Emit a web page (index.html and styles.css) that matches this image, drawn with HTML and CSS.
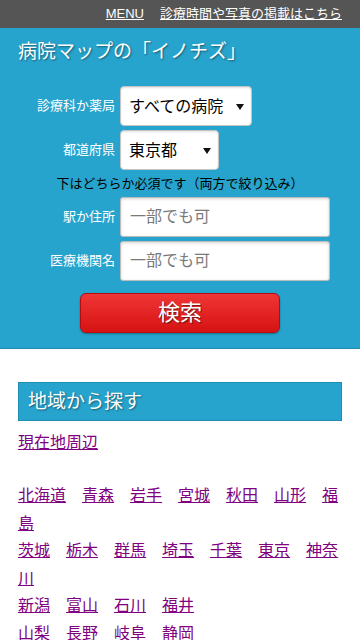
FILE: index.html
```html
<!DOCTYPE html>
<html lang="ja">
<head>
<meta charset="utf-8">
<title>病院マップの「イノチズ」</title>
<link rel="stylesheet" href="styles.css">
</head>
<body>
<div class="topbar">
  <a href="#">MENU</a>
  <a href="#">診療時間や写真の掲載はこちら</a>
</div>
<div class="hero">
  <h1 class="title">病院マップの「イノチズ」</h1>
  <form class="form">
    <div class="row">
      <label class="label">診療科か薬局</label>
      <div class="select-wrap w1"><select class="select"><option>すべての病院</option></select></div>
    </div>
    <div class="row">
      <label class="label">都道府県</label>
      <div class="select-wrap w2"><select class="select"><option>東京都</option></select></div>
    </div>
    <p class="note">下はどちらか必須です（両方で絞り込み）</p>
    <div class="row">
      <label class="label">駅か住所</label>
      <input class="input" type="text" placeholder="一部でも可">
    </div>
    <div class="row">
      <label class="label">医療機関名</label>
      <input class="input" type="text" placeholder="一部でも可">
    </div>
    <div class="btn-row"><button class="btn" type="button">検索</button></div>
  </form>
</div>
<div class="content">
  <h2 class="heading">地域から探す</h2>
  <p class="near"><a class="link" href="#">現在地周辺</a></p>
  <div class="prefs">
    <div class="group"><a class="link" href="#">北海道</a><a class="link" href="#">青森</a><a class="link" href="#">岩手</a><a class="link" href="#">宮城</a><a class="link" href="#">秋田</a><a class="link" href="#">山形</a><a class="link" href="#">福島</a></div>
    <div class="group"><a class="link" href="#">茨城</a><a class="link" href="#">栃木</a><a class="link" href="#">群馬</a><a class="link" href="#">埼玉</a><a class="link" href="#">千葉</a><a class="link" href="#">東京</a><a class="link" href="#">神奈川</a></div>
    <div class="group"><a class="link" href="#">新潟</a><a class="link" href="#">富山</a><a class="link" href="#">石川</a><a class="link" href="#">福井</a></div>
    <div class="group"><a class="link" href="#">山梨</a><a class="link" href="#">長野</a><a class="link" href="#">岐阜</a><a class="link" href="#">静岡</a></div>
  </div>
</div>
</body>
</html>
```
FILE: styles.css
```css
* { box-sizing: border-box; }
html, body { margin: 0; padding: 0; }
body {
  font-family: "Liberation Sans", "Noto Sans CJK JP", sans-serif;
  background: #fff;
  color: #000;
}
.topbar {
  height: 28px;
  background: #555555;
  display: flex;
  justify-content: flex-end;
  align-items: center;
  gap: 16px;
  padding-right: 18px;
  font-size: 13px;
  line-height: 16px;
}
.topbar a { color: #fff; text-decoration: underline; }
.hero {
  background: #27a4cd;
  padding: 12px 0 15px;
  border-bottom: 1px solid #1f8db3;
}
.title {
  margin: 0;
  padding-left: 18px;
  font-size: 19px;
  font-weight: normal;
  line-height: 24px;
  color: #fff;
  text-shadow: 1px 1px 2px rgba(0,0,0,0.45);
}
.form {
  margin: 22px 0 0;
  display: flex;
  flex-direction: column;
  gap: 4px;
}
.row {
  display: grid;
  grid-template-columns: 115px auto;
  column-gap: 5px;
  align-items: center;
  justify-items: start;
}
.label {
  justify-self: end;
  font-size: 13px;
  color: #fff;
  line-height: 18px;
  white-space: nowrap;
}
.select-wrap {
  position: relative;
  height: 40px;
}
.select-wrap.w1 { width: 132px; }
.select-wrap.w2 { width: 99px; }
.select-wrap::after {
  content: "";
  position: absolute;
  right: 8px;
  top: 18px;
  border-left: 4px solid transparent;
  border-right: 4px solid transparent;
  border-top: 6px solid #111;
  pointer-events: none;
}
.select {
  -webkit-appearance: none;
  appearance: none;
  width: 100%;
  height: 40px;
  border: 1px solid #c4c4c4;
  border-radius: 4px;
  background: #fff;
  padding: 0 0 0 8px;
  font-family: inherit;
  font-size: 16px;
  color: #000;
  box-shadow: inset 0 1px 2px rgba(0,0,0,0.12);
  margin: 0;
}
.note {
  margin: 0;
  padding: 1px 0 0;
  text-align: center;
  font-size: 13px;
  line-height: 18px;
  color: #000;
}
.input {
  width: 210px;
  height: 40px;
  border: 1px solid #bdbdbd;
  border-radius: 3px;
  background: #fff;
  padding: 0 9px;
  font-family: inherit;
  font-size: 16px;
  box-shadow: inset 0 1px 3px rgba(0,0,0,0.18);
  margin: 0;
}
.input::placeholder { color: #7a7a7a; }
.btn-row {
  display: flex;
  justify-content: center;
  margin-top: 8px;
}
.btn {
  width: 200px;
  height: 40px;
  border: 1px solid #b30d0d;
  border-radius: 6px;
  background: linear-gradient(#f03636, #d61212);
  color: #fff;
  font-family: inherit;
  font-size: 22px;
  line-height: 36px;
  padding: 0;
  text-shadow: 1px 1px 1px rgba(0,0,0,0.5);
  box-shadow: 0 1px 2px rgba(0,0,0,0.35);
}
.content {
  padding: 33px 18px 20px;
}
.heading {
  margin: 0;
  height: 39px;
  background: #27a4cd;
  border: 1px solid #1f8db3;
  padding-left: 9px;
  font-size: 19px;
  font-weight: normal;
  line-height: 37px;
  color: #fff;
  text-shadow: 1px 1px 2px rgba(0,0,0,0.45);
}
.near {
  margin: 8px 0 0;
  font-size: 16px;
  line-height: 27px;
}
.link {
  color: #800080;
  text-decoration: underline;
}
.prefs {
  margin-top: 26px;
  font-size: 16px;
  line-height: 27.6px;
}
.prefs .link { margin-right: 16px; }
```
